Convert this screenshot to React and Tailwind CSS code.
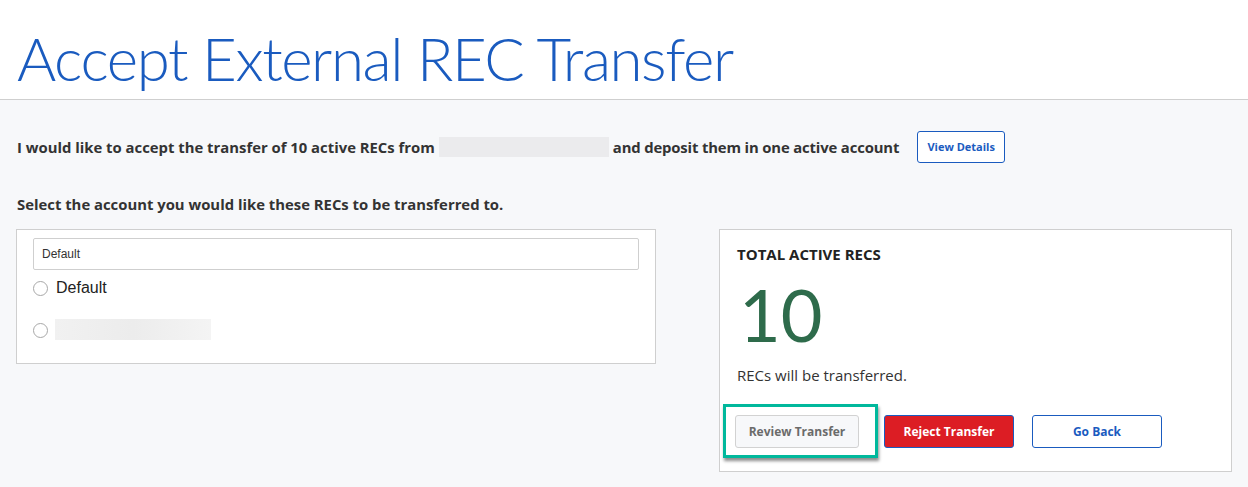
import React from "react";

export default function App() {
  return (
    <div className="min-h-[487px] bg-[#f7f8fa] text-[#333]" style={{ fontFamily: "'Open Sans', 'Noto Sans', sans-serif" }}>
      <header className="h-[100px] bg-white border-b border-[#cfcfcf] px-[17px] pt-[18px]">
        <h1 className="text-[60px] leading-[80px] font-light text-[#1a5bbf] tracking-[-1.4px]" style={{ fontFamily: "Lato, sans-serif" }}>
          Accept External REC Transfer
        </h1>
      </header>
      <main className="px-[16px]">
        <div className="flex items-center h-[32px] mt-[31px] pl-[1px]">
          <span className="text-[14.85px] font-bold text-[#333]">I would like to accept the transfer of 10 active RECs from</span>
          <span className="inline-block w-[170px] h-[20px] bg-[#ebebed] mx-[4px]"></span>
          <span className="text-[14.85px] font-bold text-[#333] tracking-[-0.15px]">and deposit them in one active account</span>
          <button className="ml-[18px] h-[32px] w-[88px] bg-white border border-[#1a5bbf] rounded-[3px] text-[11px] font-bold text-[#1a5bbf]">
            View Details
          </button>
        </div>
        <p className="mt-[31px] pl-[1px] text-[14.85px] font-bold leading-[20px] text-[#333]">
          Select the account you would like these RECs to be transferred to.
        </p>
        <div className="flex gap-[63px] mt-[15px] items-start">
          <div className="w-[640px] h-[135px] bg-white border border-[#cfcfcf] px-[16px] pt-[8px]" style={{ fontFamily: "'Liberation Sans', Arial, sans-serif" }}>
            <div className="h-[32px] border border-[#cfcfcf] rounded-[2px] flex items-center pl-[8px] text-[12px] text-[#333]">
              Default
            </div>
            <label className="flex items-center h-[20px] mt-[8px]">
              <span className="w-[15px] h-[15px] rounded-full border border-[#a8a8a8] bg-white"></span>
              <span className="ml-[8px] text-[16px] text-[#222]">Default</span>
            </label>
            <label className="flex items-center h-[22px] mt-[20px]">
              <span className="w-[15px] h-[15px] rounded-full border border-[#a8a8a8] bg-white mt-[3px]"></span>
              <span className="ml-[7px] w-[156px] h-[21px] bg-gradient-to-r from-[#f1f1f1] via-[#ececec] to-[#f4f4f4]"></span>
            </label>
          </div>
          <div className="w-[513px] h-[243px] bg-white border border-[#cfcfcf] px-[17px] pt-[14px]">
            <h2 className="text-[15px] font-bold leading-[20px] text-[#222]">TOTAL ACTIVE RECS</h2>
            <div className="text-[72px] leading-[80px] text-[#2e6b4b] mt-[10px] pl-[2px]" style={{ fontFamily: "Lato, sans-serif" }}>10</div>
            <p className="text-[15px] leading-[20px] text-[#333] mt-[11px]">RECs will be transferred.</p>
            <div className="flex items-center mt-[30px] relative">
              <div className="absolute left-[-14px] top-[-11px] w-[155px] h-[54px] border-[3px] border-[#00b89c] bg-white shadow-[1px_3px_3px_rgba(0,0,0,0.45)]"></div>
              <button className="relative w-[124px] h-[33px] bg-[#f7f8fa] border border-[#d2d2d2] rounded-[3px] text-[12px] font-bold text-[#6b6b6b] -ml-[2px]">
                Review Transfer
              </button>
              <button className="ml-[25px] w-[130px] h-[33px] bg-[#dc1d24] border border-[#1a5bbf] rounded-[3px] text-[12px] font-bold text-white">
                Reject Transfer
              </button>
              <button className="ml-[18px] w-[130px] h-[33px] bg-white border border-[#1a5bbf] rounded-[3px] text-[12px] font-bold text-[#1a5bbf]">
                Go Back
              </button>
            </div>
          </div>
        </div>
      </main>
    </div>
  );
}
